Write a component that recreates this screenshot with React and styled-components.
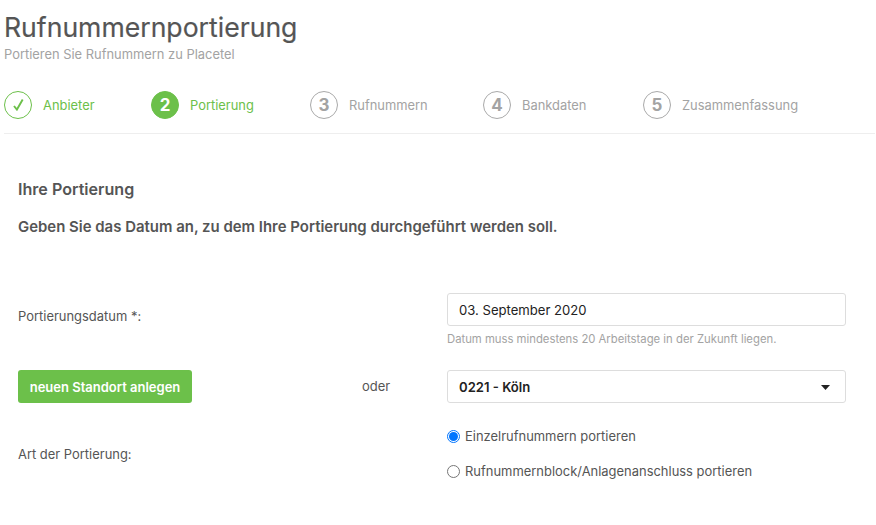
import React from "react";
import styled, { createGlobalStyle } from "styled-components";

const Global = createGlobalStyle`
  html, body { margin: 0; padding: 0; background: #fff; }
  body { font-family: "Inter", "Liberation Sans", sans-serif; color: #555; }
`;
const Page = styled.div`
  width: 876px; height: 525px; overflow: hidden; box-sizing: border-box; padding: 0 1px 0 4px;
`;
const Title = styled.h1`
  margin: 0; padding-top: 12px; font-size: 26.6px; line-height: 30px; font-weight: 400; color: #555;
  -webkit-text-stroke: 0.2px #555;
`;
const Subtitle = styled.p`
  margin: 0; padding-top: 4px; font-size: 12.9px; line-height: 17px; color: #a3a3a3;
`;
const Steps = styled.div`
  display: flex; align-items: center; height: 28px; margin-top: 28px; padding-bottom: 14px;
  border-bottom: 1px solid #eee;
`;
const Step = styled.div`
  display: flex; align-items: center; gap: 11px; width: ${p => p.$w}px; flex: none;
`;
const Circle = styled.div`
  width: 28px; height: 28px; box-sizing: border-box; border-radius: 50%; flex: none;
  display: flex; align-items: center; justify-content: center;
  font-size: 17px; font-weight: 700;
  border: 1px solid ${p => (p.$state === "todo" ? "#a9a9a9" : "#6cc04a")};
  background: ${p => (p.$state === "active" ? "#6cc04a" : "#fff")};
  color: ${p => (p.$state === "active" ? "#fff" : "#a3a3a3")};
`;
const StepLabel = styled.span`
  font-size: 12.9px; color: ${p => (p.$state === "todo" ? "#a3a3a3" : "#6cc04a")};
`;
const Check = styled.svg`
  width: 11px; height: 12px; fill: none; stroke: #6cc04a; stroke-width: 1.9;
`;
const Content = styled.div`
  padding: 45px 0 0 14px;
`;
const Heading = styled.h2`
  margin: 0; font-size: 16.1px; line-height: 20px; font-weight: 600; color: #555;
`;
const Lead = styled.p`
  margin: 18px 0 0; font-size: 14.95px; line-height: 20px; font-weight: 600; color: #555;
`;
const Row = styled.div`
  display: grid; grid-template-columns: 344px 85px 399px; align-items: ${p => p.$align || "center"};
  margin-top: ${p => p.$mt}px;
`;
const DateLabel = styled.div`
  font-size: 12.95px; line-height: 17px; color: #555; grid-column: 1 / 3; padding-top: 15px;
`;
const Label = styled.div`
  font-size: 12.95px; line-height: 17px; color: #555; grid-column: 1 / 3;
`;
const Field = styled.div`
  height: 33px; box-sizing: border-box; border: 1px solid #ddd; border-radius: 3px;
  display: flex; align-items: center; justify-content: space-between; padding: 0 11px;
  font-size: 13.1px; color: #222; font-weight: ${p => (p.$bold ? 600 : 400)};
`;
const Hint = styled.div`
  margin-top: 6px; font-size: 11.3px; line-height: 15px; color: #a3a3a3;
`;
const Button = styled.button`
  justify-self: start; height: 33px; width: 174px; border: 0; border-radius: 3px; padding: 0;
  background: #6cc04a; color: #fff; font: 600 13px "Inter", sans-serif;
`;
const Or = styled.div`
  font-size: 13px; color: #555; padding-bottom: 2px;
`;
const Caret = styled.svg`
  width: 9px; height: 5px; margin: 2px 4px 0 0; fill: #222;
`;
const Radios = styled.div`
  display: flex; flex-direction: column; gap: 18px;
`;
const RadioRow = styled.label`
  display: flex; align-items: center; gap: 5px; font-size: 12.95px; line-height: 17px; color: #555;
`;
const RadioDot = styled.span`
  width: 13px; height: 13px; box-sizing: border-box; border-radius: 50%; flex: none;
  border: ${p => (p.$on ? "1px solid #0075ff" : "1px solid #767676")};
  background: #fff; display: flex; align-items: center; justify-content: center;
  &::after { content: ""; width: 9px; height: 9px; border-radius: 50%; background: ${p => (p.$on ? "#0075ff" : "transparent")}; }
`;

const steps = [
  { n: "2", label: "Portierung", state: "active", w: 159 },
  { n: "3", label: "Rufnummern", state: "todo", w: 173 },
  { n: "4", label: "Bankdaten", state: "todo", w: 160 },
  { n: "5", label: "Zusammenfassung", state: "todo", w: 200 },
];

export default function App() {
  return (
    <Page>
      <Global />
      <Title>Rufnummernportierung</Title>
      <Subtitle>Portieren Sie Rufnummern zu Placetel</Subtitle>
      <Steps>
        <Step $w={147}>
          <Circle $state="done">
            <Check viewBox="0 0 11 12"><path d="M1 7 L3.9 10.6 L9.7 .6" /></Check>
          </Circle>
          <StepLabel $state="done">Anbieter</StepLabel>
        </Step>
        {steps.map(s => (
          <Step key={s.n} $w={s.w}>
            <Circle $state={s.state}>{s.n}</Circle>
            <StepLabel $state={s.state}>{s.label}</StepLabel>
          </Step>
        ))}
      </Steps>
      <Content>
        <Heading>Ihre Portierung</Heading>
        <Lead>Geben Sie das Datum an, zu dem Ihre Portierung durchgeführt werden soll.</Lead>
        <Row $mt={56} $align="start">
          <DateLabel>Portierungsdatum *:</DateLabel>
          <div>
            <Field>03. September 2020</Field>
            <Hint>Datum muss mindestens 20 Arbeitstage in der Zukunft liegen.</Hint>
          </div>
        </Row>
        <Row $mt={23}>
          <Button>neuen Standort anlegen</Button>
          <Or>oder</Or>
          <Field $bold>
            0221 - Köln
            <Caret viewBox="0 0 9 5"><path d="M0 0h9L4.5 5z" /></Caret>
          </Field>
        </Row>
        <Row $mt={25}>
          <Label>Art der Portierung:</Label>
          <Radios>
            <RadioRow><RadioDot $on />Einzelrufnummern portieren</RadioRow>
            <RadioRow><RadioDot />Rufnummernblock/Anlagenanschluss portieren</RadioRow>
          </Radios>
        </Row>
      </Content>
    </Page>
  );
}
